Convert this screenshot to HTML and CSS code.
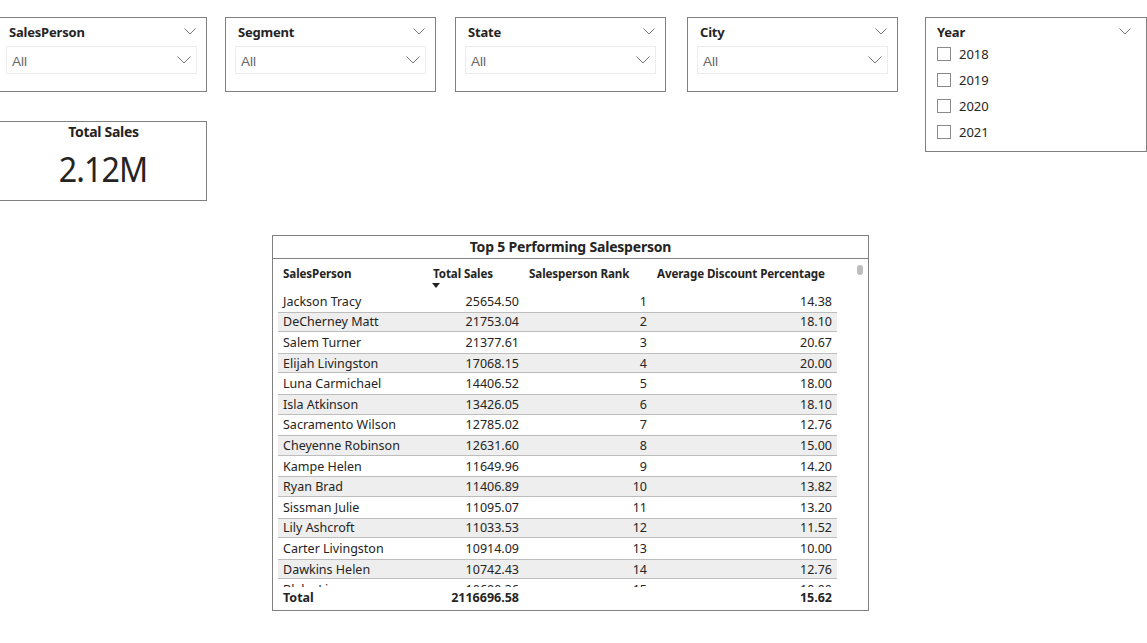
FILE: index.html
```html
<!DOCTYPE html>
<html>
<head>
<meta charset="utf-8">
<link rel="stylesheet" href="styles.css">
</head>
<body>
<div class="page">
  <div class="top">
    <div class="slicer s1">
      <div class="slicer-head"><span class="slicer-title">SalesPerson</span><svg class="chev" width="12" height="7" viewBox="0 0 12 7"><polyline points="0.5,0.5 6,6 11.5,0.5" fill="none" stroke="#777" stroke-width="1"/></svg></div>
      <div class="dropdown"><span>All</span><svg class="chev" width="14" height="8" viewBox="0 0 14 8"><polyline points="0.5,0.5 7,7 13.5,0.5" fill="none" stroke="#777" stroke-width="1"/></svg></div>
    </div>
    <div class="slicer s2">
      <div class="slicer-head"><span class="slicer-title">Segment</span><svg class="chev" width="12" height="7" viewBox="0 0 12 7"><polyline points="0.5,0.5 6,6 11.5,0.5" fill="none" stroke="#777" stroke-width="1"/></svg></div>
      <div class="dropdown"><span>All</span><svg class="chev" width="14" height="8" viewBox="0 0 14 8"><polyline points="0.5,0.5 7,7 13.5,0.5" fill="none" stroke="#777" stroke-width="1"/></svg></div>
    </div>
    <div class="slicer s3">
      <div class="slicer-head"><span class="slicer-title">State</span><svg class="chev" width="12" height="7" viewBox="0 0 12 7"><polyline points="0.5,0.5 6,6 11.5,0.5" fill="none" stroke="#777" stroke-width="1"/></svg></div>
      <div class="dropdown"><span>All</span><svg class="chev" width="14" height="8" viewBox="0 0 14 8"><polyline points="0.5,0.5 7,7 13.5,0.5" fill="none" stroke="#777" stroke-width="1"/></svg></div>
    </div>
    <div class="slicer s4">
      <div class="slicer-head"><span class="slicer-title">City</span><svg class="chev" width="12" height="7" viewBox="0 0 12 7"><polyline points="0.5,0.5 6,6 11.5,0.5" fill="none" stroke="#777" stroke-width="1"/></svg></div>
      <div class="dropdown"><span>All</span><svg class="chev" width="14" height="8" viewBox="0 0 14 8"><polyline points="0.5,0.5 7,7 13.5,0.5" fill="none" stroke="#777" stroke-width="1"/></svg></div>
    </div>
    <div class="slicer year">
      <div class="slicer-head"><span class="slicer-title">Year</span><svg class="chev" width="12" height="7" viewBox="0 0 12 7"><polyline points="0.5,0.5 6,6 11.5,0.5" fill="none" stroke="#777" stroke-width="1"/></svg></div>
      <ul class="checks">
        <li><span class="box"></span>2018</li>
        <li><span class="box"></span>2019</li>
        <li><span class="box"></span>2020</li>
        <li><span class="box"></span>2021</li>
      </ul>
    </div>
    <div class="card">
      <div class="card-title">Total Sales</div>
      <div class="card-value">2.12M</div>
    </div>
  </div>

  <div class="table-visual">
    <div class="tv-title">Top 5 Performing Salesperson</div>
    <div class="tv-body">
      <div class="grid-wrap">
        <div class="row head">
          <div class="c1">SalesPerson</div>
          <div class="c2 left">Total Sales<span class="sort"></span></div>
          <div class="c3 left">Salesperson Rank</div>
          <div class="c4 left">Average Discount Percentage</div>
        </div>
        <div class="rows">
          <div class="row"><div class="c1">Jackson Tracy</div><div class="c2">25654.50</div><div class="c3">1</div><div class="c4">14.38</div></div>
          <div class="row alt"><div class="c1">DeCherney Matt</div><div class="c2">21753.04</div><div class="c3">2</div><div class="c4">18.10</div></div>
          <div class="row"><div class="c1">Salem Turner</div><div class="c2">21377.61</div><div class="c3">3</div><div class="c4">20.67</div></div>
          <div class="row alt"><div class="c1">Elijah Livingston</div><div class="c2">17068.15</div><div class="c3">4</div><div class="c4">20.00</div></div>
          <div class="row"><div class="c1">Luna Carmichael</div><div class="c2">14406.52</div><div class="c3">5</div><div class="c4">18.00</div></div>
          <div class="row alt"><div class="c1">Isla Atkinson</div><div class="c2">13426.05</div><div class="c3">6</div><div class="c4">18.10</div></div>
          <div class="row"><div class="c1">Sacramento Wilson</div><div class="c2">12785.02</div><div class="c3">7</div><div class="c4">12.76</div></div>
          <div class="row alt"><div class="c1">Cheyenne Robinson</div><div class="c2">12631.60</div><div class="c3">8</div><div class="c4">15.00</div></div>
          <div class="row"><div class="c1">Kampe Helen</div><div class="c2">11649.96</div><div class="c3">9</div><div class="c4">14.20</div></div>
          <div class="row alt"><div class="c1">Ryan Brad</div><div class="c2">11406.89</div><div class="c3">10</div><div class="c4">13.82</div></div>
          <div class="row"><div class="c1">Sissman Julie</div><div class="c2">11095.07</div><div class="c3">11</div><div class="c4">13.20</div></div>
          <div class="row alt"><div class="c1">Lily Ashcroft</div><div class="c2">11033.53</div><div class="c3">12</div><div class="c4">11.52</div></div>
          <div class="row"><div class="c1">Carter Livingston</div><div class="c2">10914.09</div><div class="c3">13</div><div class="c4">10.00</div></div>
          <div class="row alt"><div class="c1">Dawkins Helen</div><div class="c2">10742.43</div><div class="c3">14</div><div class="c4">12.76</div></div>
          <div class="row"><div class="c1">Blake Lin</div><div class="c2">10690.36</div><div class="c3">15</div><div class="c4">10.00</div></div>
        </div>
        <div class="row total">
          <div class="c1">Total</div><div class="c2">2116696.58</div><div class="c3"></div><div class="c4">15.62</div>
        </div>
      </div>
      <div class="scroll-thumb"></div>
    </div>
  </div>
</div>
</body>
</html>
```

FILE: styles.css
```css
* { box-sizing: border-box; }
html, body { margin: 0; padding: 0; background: #ffffff; }
body {
  font-family: "Noto Sans", "Open Sans", sans-serif;
  color: #252423;
  overflow: hidden;
  width: 1147px;
  height: 643px;
}
.page { padding-top: 17px; }

.top {
  display: grid;
  grid-template-columns: 210px 210px 210px 210px 222px;
  grid-template-rows: 75px 80px;
  column-gap: 0;
  row-gap: 29px;
  margin-left: -4px;
}

.slicer {
  border: 1px solid #808080;
  background: #fff;
  padding: 4px 8px 0 12px;
  width: 211px;
  height: 75px;
}
.s1 { grid-column: 1; grid-row: 1; }
.s2 { grid-column: 2; grid-row: 1; margin-left: 19px; }
.s3 { grid-column: 3; grid-row: 1; margin-left: 39px; }
.s4 { grid-column: 4; grid-row: 1; margin-left: 61px; }
.slicer.year {
  grid-column: 5;
  grid-row: 1 / span 2;
  margin-left: 89px;
  height: 135px;
  width: 222px;
  align-self: start;
  padding: 4px 13px 0 11px;
}
.card { grid-column: 1; grid-row: 2; }

.slicer-head {
  display: flex;
  align-items: flex-start;
  justify-content: space-between;
  height: 24px;
  padding-top: 2px;
}
.slicer-title {
  font-family: "Noto Sans", sans-serif;
  font-weight: 700;
  font-size: 13px;
  line-height: 16px;
  color: #252423;
  letter-spacing: -0.2px;
}
.slicer-head .chev { margin-top: 4px; margin-right: 2px; }
.dropdown {
  margin-left: -3px;
  margin-right: 1px;
  height: 28px;
  border: 1px solid #ececec;
  display: flex;
  align-items: center;
  justify-content: space-between;
  padding: 3px 5px 0 5px;
  font-family: "Liberation Sans", Arial, sans-serif;
  font-size: 13.5px;
  color: #666;
}
.dropdown .chev { margin-top: -3px; }

.checks { list-style: none; margin: 0; padding: 0; margin-top: -5px; }
.checks li {
  display: flex;
  align-items: center;
  height: 26px;
  font-size: 13px;
  color: #252423;
}
.checks .box {
  width: 14px;
  height: 14px;
  border: 1px solid #8a8a8a;
  margin-right: 8px;
  background: #fff;
}

.card {
  border: 1px solid #808080;
  width: 211px;
  height: 80px;
  display: flex;
  flex-direction: column;
  align-items: center;
  padding-left: 4px;
}
.card-title {
  font-weight: 700;
  font-size: 14px;
  line-height: 18px;
  margin-top: 1px;
  letter-spacing: -0.3px;
}
.card-value {
  font-family: "Noto Sans", sans-serif;
  font-size: 35px;
  line-height: 40px;
  margin-top: 8px;
  color: #252423;
  letter-spacing: -1px;
  transform: scaleX(0.92);
}

.table-visual {
  margin-left: 272px;
  margin-top: 34px;
  width: 597px;
  height: 376px;
  border: 1px solid #808080;
  display: flex;
  flex-direction: column;
}
.tv-title {
  height: 23px;
  border-bottom: 1px solid #808080;
  text-align: center;
  font-weight: 700;
  font-size: 14px;
  line-height: 21px;
  letter-spacing: -0.2px;
}
.tv-body {
  display: flex;
  position: relative;
  flex: 1;
}
.grid-wrap {
  margin-left: 5px;
  width: 559px;
  display: flex;
  flex-direction: column;
}
.row {
  display: grid;
  grid-template-columns: 150px 96px 128px 185px;
  height: 20.6px;
  align-items: center;
  font-size: 12.5px;
}
.row > div {
  padding: 0 5px 0 5px;
  text-align: right;
  white-space: nowrap;
  overflow: hidden;
}
.row > .c1 { text-align: left; }
.row > .left { text-align: left; }
.row.alt {
  background: #eeeeee;
  border-top: 1px solid #bdbdbd;
  border-bottom: 1px solid #bdbdbd;
}
.head {
  height: 32px;
  align-items: start;
  padding-top: 7px;
  font-weight: 700;
  font-size: 11.6px;
  letter-spacing: -0.1px;
}
.head > div { overflow: visible; position: relative; }
.sort {
  position: absolute;
  left: 4px;
  top: 17px;
  width: 0;
  height: 0;
  border-left: 4px solid transparent;
  border-right: 4px solid transparent;
  border-top: 5px solid #252423;
}
.rows {
  height: 296px;
  overflow: hidden;
}
.total {
  font-weight: 700;
  font-size: 12.5px;
  height: 19px;
  align-items: end;
}
.scroll-thumb {
  position: absolute;
  left: 584px;
  top: 6px;
  width: 6px;
  height: 10px;
  border-radius: 3px;
  background: #bdbdbd;
}
```
